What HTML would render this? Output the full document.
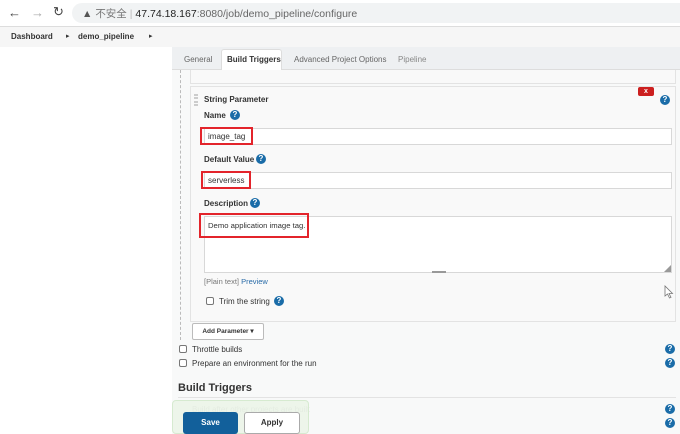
<!DOCTYPE html>
<html><head><meta charset="utf-8"><style>
*{box-sizing:border-box;margin:0;padding:0}
body{width:680px;height:434px;overflow:hidden;background:#fff;font-family:"Liberation Sans","Noto Sans CJK SC",sans-serif;position:relative;color:#333}
.a{position:absolute}
.lbl{font-size:8px;font-weight:bold;color:#333}
.help{width:10px;height:10px;border-radius:50%;background:#1a6ca8;color:#fff;font-size:8px;font-weight:bold;text-align:center;line-height:10px}
.inp{background:#fff;border:1px solid #d8d8d8}
.red{border:2px solid #e3242b}
.cb{width:8px;height:8px;border:1px solid #777;border-radius:2px;background:#fff}
.t{font-size:8px;color:#333}
</style></head><body>
<div class="a" style="left:0;top:0;width:680px;height:27px;background:#fff;border-bottom:1px solid #ddd"></div>
<div class="a" style="left:8px;top:5px;font-size:13px;color:#444">←</div>
<div class="a" style="left:31px;top:5px;font-size:13px;color:#aaa">→</div>
<div class="a" style="left:53px;top:4px;font-size:13px;color:#444">↻</div>
<div class="a" style="left:72px;top:3px;width:620px;height:20px;border-radius:10px;background:#f1f3f4"></div>
<div class="a" style="left:82px;top:6px;font-size:10.5px;color:#555">▲ <span style="color:#777">不安全</span> <span style="color:#bbb">|</span> <span style="color:#222">47.74.18.167</span><span style="color:#666">:8080/job/demo_pipeline/configure</span></div>
<div class="a" style="left:0;top:27px;width:680px;height:20px;background:#f6f6f6"></div>
<div class="a" style="left:11px;top:32px;font-size:8px;font-weight:bold;color:#333">Dashboard</div>
<div class="a" style="left:66px;top:32px;font-size:7px;color:#333">▸</div>
<div class="a" style="left:78px;top:32px;font-size:8px;font-weight:bold;color:#333">demo_pipeline</div>
<div class="a" style="left:149px;top:32px;font-size:7px;color:#333">▸</div>
<div class="a" style="left:172px;top:47px;width:508px;height:387px;background:#f8f9f9"></div>
<div class="a" style="left:172px;top:47px;width:508px;height:23px;background:#eef0f2;border-bottom:1px solid #ddd"></div>
<div class="a" style="left:221px;top:49px;width:61px;height:22px;background:#fff;border:1px solid #ddd;border-bottom:none;border-radius:3px 3px 0 0"></div>
<div class="a t" style="left:184px;top:55px;color:#666">General</div>
<div class="a t" style="left:227px;top:55px;font-weight:bold">Build Triggers</div>
<div class="a t" style="left:294px;top:55px;color:#666">Advanced Project Options</div>
<div class="a t" style="left:398px;top:55px;color:#888">Pipeline</div>
<div class="a" style="left:180px;top:70px;height:270px;border-left:1px dashed #bbb"></div>
<div class="a" style="left:190px;top:70px;width:486px;height:14px;border:1px solid #e3e3e3;border-top:none;background:#f9f9f9"></div>
<div class="a" style="left:190px;top:86px;width:486px;height:236px;border:1px solid #e3e3e3;background:#f9f9f9"></div>
<div class="a" style="left:638px;top:87px;width:16px;height:9px;background:#cc1f1f;border-radius:2px;color:#fff;font-size:7px;font-weight:bold;text-align:center;line-height:9px">x</div>
<div class="a help" style="left:660px;top:95px">?</div>
<div class="a" style="left:194px;top:94px;width:4px;height:12px;border-left:2px dotted #ccc;border-right:2px dotted #ccc"></div>
<div class="a lbl" style="left:204px;top:95px">String Parameter</div>
<div class="a lbl" style="left:204px;top:111px">Name</div><div class="a help" style="left:230px;top:110px">?</div>
<div class="a inp" style="left:204px;top:128px;width:468px;height:17px"></div>
<div class="a red" style="left:200px;top:127px;width:53px;height:18px"></div>
<div class="a t" style="left:208px;top:132px">image_tag</div>
<div class="a lbl" style="left:204px;top:155px">Default Value</div><div class="a help" style="left:256px;top:154px">?</div>
<div class="a inp" style="left:204px;top:172px;width:468px;height:17px"></div>
<div class="a red" style="left:201px;top:171px;width:50px;height:18px"></div>
<div class="a t" style="left:208px;top:176px">serverless</div>
<div class="a lbl" style="left:204px;top:199px">Description</div><div class="a help" style="left:250px;top:198px">?</div>
<div class="a inp" style="left:204px;top:216px;width:468px;height:57px"></div>
<div class="a" style="left:432px;top:271px;width:14px;height:2px;background:#999"></div>
<div class="a" style="left:664px;top:264px;font-size:7px;color:#999">◢</div>
<div class="a red" style="left:199px;top:213px;width:110px;height:25px"></div>
<div class="a t" style="left:208px;top:221px;font-size:7.7px">Demo application image tag.</div>
<div class="a" style="left:204px;top:277px;font-size:7.5px;color:#777">[Plain text] <span style="color:#2a6ca8">Preview</span></div>
<div class="a cb" style="left:206px;top:297px"></div>
<div class="a t" style="left:219px;top:297px">Trim the string</div>
<div class="a help" style="left:274px;top:296px">?</div>
<div class="a" style="left:192px;top:323px;width:72px;height:17px;background:#fff;border:1px solid #bbb;border-radius:2px;font-size:6.5px;font-weight:bold;text-align:center;line-height:15px">Add Parameter ▾</div>
<div class="a cb" style="left:179px;top:345px"></div>
<div class="a t" style="left:192px;top:345px">Throttle builds</div>
<div class="a help" style="left:665px;top:344px">?</div>
<div class="a cb" style="left:179px;top:359px"></div>
<div class="a t" style="left:192px;top:359px">Prepare an environment for the run</div>
<div class="a help" style="left:665px;top:358px">?</div>
<div class="a" style="left:178px;top:382px;font-size:11px;font-weight:bold;color:#333">Build Triggers</div>
<div class="a" style="left:178px;top:397px;width:498px;border-top:1px solid #e3e3e3"></div>
<div class="a t" style="left:192px;top:405px;color:#bbb">Build after other projects are built</div>
<div class="a help" style="left:665px;top:404px">?</div>
<div class="a help" style="left:665px;top:418px">?</div>
<div class="a" style="left:172px;top:400px;width:137px;height:34px;background:rgba(235,245,232,.85);border:1px solid #d6ead0;border-radius:4px"></div>
<div class="a" style="left:183px;top:412px;width:55px;height:22px;background:#12609b;border-radius:3px;color:#fff;font-size:8px;font-weight:bold;text-align:center;line-height:22px">Save</div>
<div class="a" style="left:244px;top:412px;width:56px;height:22px;background:#fff;border:1px solid #aaa;border-radius:3px;font-size:8px;font-weight:bold;text-align:center;line-height:20px">Apply</div>
<svg class="a" style="left:664px;top:285px" width="10" height="14" viewBox="0 0 10 14"><path d="M1 1 L1 11 L3.5 9 L5.5 13 L7 12.3 L5 8.5 L8.5 8.5 Z" fill="#fff" stroke="#777" stroke-width="0.8"/></svg>
</body></html>
